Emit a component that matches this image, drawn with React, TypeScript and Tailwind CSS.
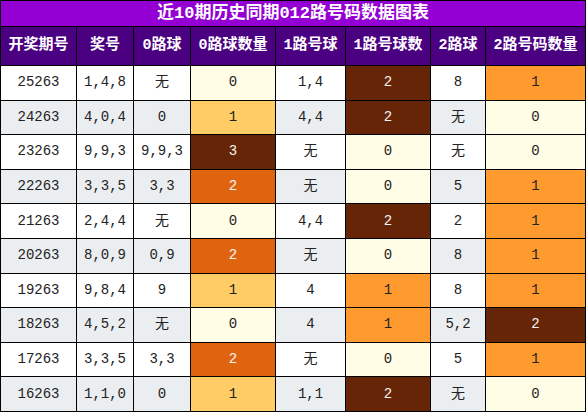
import React from 'react';

const rows = [
  ['25263', '1,4,8', '无', 0, '1,4', 2, '8', 1],
  ['24263', '4,0,4', '0', 1, '4,4', 2, '无', 0],
  ['23263', '9,9,3', '9,9,3', 3, '无', 0, '无', 0],
  ['22263', '3,3,5', '3,3', 2, '无', 0, '5', 1],
  ['21263', '2,4,4', '无', 0, '4,4', 2, '2', 1],
  ['20263', '8,0,9', '0,9', 2, '无', 0, '8', 1],
  ['19263', '9,8,4', '9', 1, '4', 1, '8', 1],
  ['18263', '4,5,2', '无', 0, '4', 1, '5,2', 2],
  ['17263', '3,3,5', '3,3', 2, '无', 0, '5', 1],
  ['16263', '1,1,0', '0', 1, '1,1', 2, '无', 0],
] as const;

const headers = ['开奖期号', '奖号', '0路球', '0路球数量', '1路号球', '1路号球数', '2路球', '2路号码数量'];

// 0路 has max 3, the others max 2
const zeroColors = [
  'bg-[#fffde5] text-[#222]',
  'bg-[#ffcc66] text-[#222]',
  'bg-[#e06410] text-[#f4f4f4]',
  'bg-[#662506] text-[#f4f4f4]',
];
const otherColors = [
  'bg-[#fffde5] text-[#222]',
  'bg-[#ff9a2e] text-[#222]',
  'bg-[#662506] text-[#f4f4f4]',
];

export default function App() {
  return (
    <div
      className="w-[586px] h-[412px] border border-black bg-black grid gap-px grid-cols-[75px_56px_56px_84px_69px_84px_54px_99px] grid-rows-[25px_38px_repeat(10,minmax(0,1fr))]"
      style={{ fontFamily: '"Liberation Mono", "Noto Sans CJK SC", monospace' }}
    >
      <div className="col-span-8 bg-[#9400d3] text-white font-bold text-[17px] flex items-center justify-center">
        近10期历史同期012路号码数据图表
      </div>
      {headers.map((h) => (
        <div
          key={h}
          className="bg-[#4b0082] text-white font-bold text-[15px] flex items-center justify-center whitespace-nowrap"
        >
          {h}
        </div>
      ))}
      {rows.map((r, i) => {
        const base = i % 2 === 0 ? 'bg-white' : 'bg-[#ebeef1]';
        return r.map((v, j) => {
          let color = `${base} text-[#222]`;
          if (j === 3) color = zeroColors[v as number];
          if (j === 5 || j === 7) color = otherColors[v as number];
          return (
            <div
              key={`${i}-${j}`}
              className={`${color} text-[14px] flex items-center justify-center whitespace-nowrap`}
            >
              {v}
            </div>
          );
        });
      })}
    </div>
  );
}
